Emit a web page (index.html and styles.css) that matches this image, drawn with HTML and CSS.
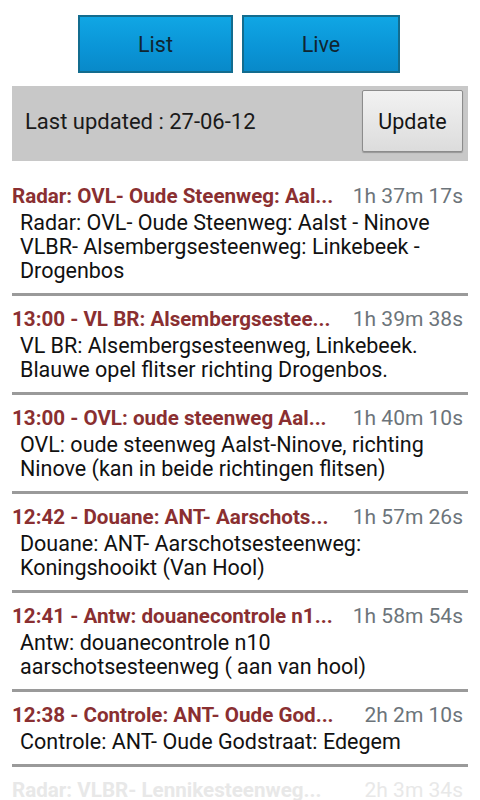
FILE: index.html
```html
<!DOCTYPE html>
<html>
<head>
<meta charset="utf-8">
<link rel="stylesheet" href="styles.css">
</head>
<body>
<div class="page">
  <div class="tabs">
    <div class="tab tab-list">List</div>
    <div class="tab tab-live">Live</div>
  </div>
  <div class="status">
    <span class="status-text">Last updated : 27-06-12</span>
    <div class="update-btn">Update</div>
  </div>
  <div class="list">
    <div class="item">
      <div class="item-head"><span class="title">Radar: OVL- Oude Steenweg: Aal...</span><span class="time">1h 37m 17s</span></div>
      <div class="desc">Radar: OVL- Oude Steenweg: Aalst - Ninove<br>VLBR- Alsembergsesteenweg: Linkebeek -<br>Drogenbos</div>
    </div>
    <div class="item">
      <div class="item-head"><span class="title">13:00 - VL BR: Alsembergsestee...</span><span class="time">1h 39m 38s</span></div>
      <div class="desc">VL BR: Alsembergsesteenweg, Linkebeek.<br>Blauwe opel flitser richting Drogenbos.</div>
    </div>
    <div class="item">
      <div class="item-head"><span class="title">13:00 - OVL: oude steenweg Aal...</span><span class="time">1h 40m 10s</span></div>
      <div class="desc">OVL: oude steenweg Aalst-Ninove, richting<br>Ninove (kan in beide richtingen flitsen)</div>
    </div>
    <div class="item">
      <div class="item-head"><span class="title">12:42 - Douane: ANT- Aarschots...</span><span class="time">1h 57m 26s</span></div>
      <div class="desc">Douane: ANT- Aarschotsesteenweg:<br>Koningshooikt (Van Hool)</div>
    </div>
    <div class="item">
      <div class="item-head"><span class="title">12:41 - Antw: douanecontrole n1...</span><span class="time">1h 58m 54s</span></div>
      <div class="desc">Antw: douanecontrole n10<br>aarschotsesteenweg ( aan van hool)</div>
    </div>
    <div class="item">
      <div class="item-head"><span class="title">12:38 - Controle: ANT- Oude God...</span><span class="time">2h 2m 10s</span></div>
      <div class="desc">Controle: ANT- Oude Godstraat: Edegem</div>
    </div>
    <div class="item item-faded">
      <div class="item-head"><span class="title">Radar: VLBR- Lennikesteenweg...</span><span class="time">2h 3m 34s</span></div>
    </div>
  </div>
</div>
</body>
</html>
```

FILE: styles.css
```css
html, body {
  margin: 0;
  padding: 0;
  background: #ffffff;
}
body {
  width: 480px;
  height: 800px;
  overflow: hidden;
  font-family: Roboto, "Noto Sans", sans-serif;
}
.page {
  display: flex;
  flex-direction: column;
}
.tabs {
  display: flex;
  justify-content: center;
  gap: 9px;
  padding-top: 15px;
  padding-right: 2px;
}
.tab {
  height: 54px;
  border: 2px solid #136c8e;
  background: linear-gradient(#10a6e4, #0a94d6 60%, #0889c9);
  color: #102530;
  font-size: 21.5px;
  display: flex;
  align-items: center;
  justify-content: center;
  box-sizing: content-box;
}
.tab-list { width: 151px; }
.tab-live { width: 154px; }
.status {
  margin: 13px 12px 0 12px;
  height: 75px;
  background: #c8c8c8;
  display: flex;
  align-items: center;
  justify-content: space-between;
  padding: 0 5px 0 13px;
}
.status-text {
  font-size: 22px;
  color: #1a1a1a;
  margin-top: -4px;
}
.update-btn {
  width: 99px;
  height: 60px;
  border: 1px solid #8c8c8c;
  border-radius: 2px;
  background: linear-gradient(#f2f2f2, #dcdcdc);
  box-shadow: 0 1px 1px rgba(0,0,0,0.25);
  font-size: 21.5px;
  color: #151515;
  display: flex;
  align-items: center;
  justify-content: center;
  margin-top: -5px;
}
.list {
  padding-top: 12px;
}
.item {
  margin: 0 12px;
  padding: 11px 0 10px 0;
  border-bottom: 3px solid #9a9a9a;
}
.item-head {
  display: flex;
  align-items: center;
  height: 24px;
}
.title {
  width: 332px;
  flex: none;
  font-weight: bold;
  font-size: 20.6px;
  color: #8a2f31;
  white-space: nowrap;
  overflow: hidden;
}
.time {
  flex: 1;
  text-align: right;
  padding-right: 5px;
  font-size: 21px;
  color: #6c747a;
  white-space: nowrap;
}
.desc {
  margin-top: 3px;
  padding-left: 8px;
  font-size: 21.5px;
  line-height: 24px;
  color: #111111;
}
.item-faded {
  border-bottom: none;
}
.item-faded .title,
.item-faded .time {
  color: #e8e8e8;
}
```
